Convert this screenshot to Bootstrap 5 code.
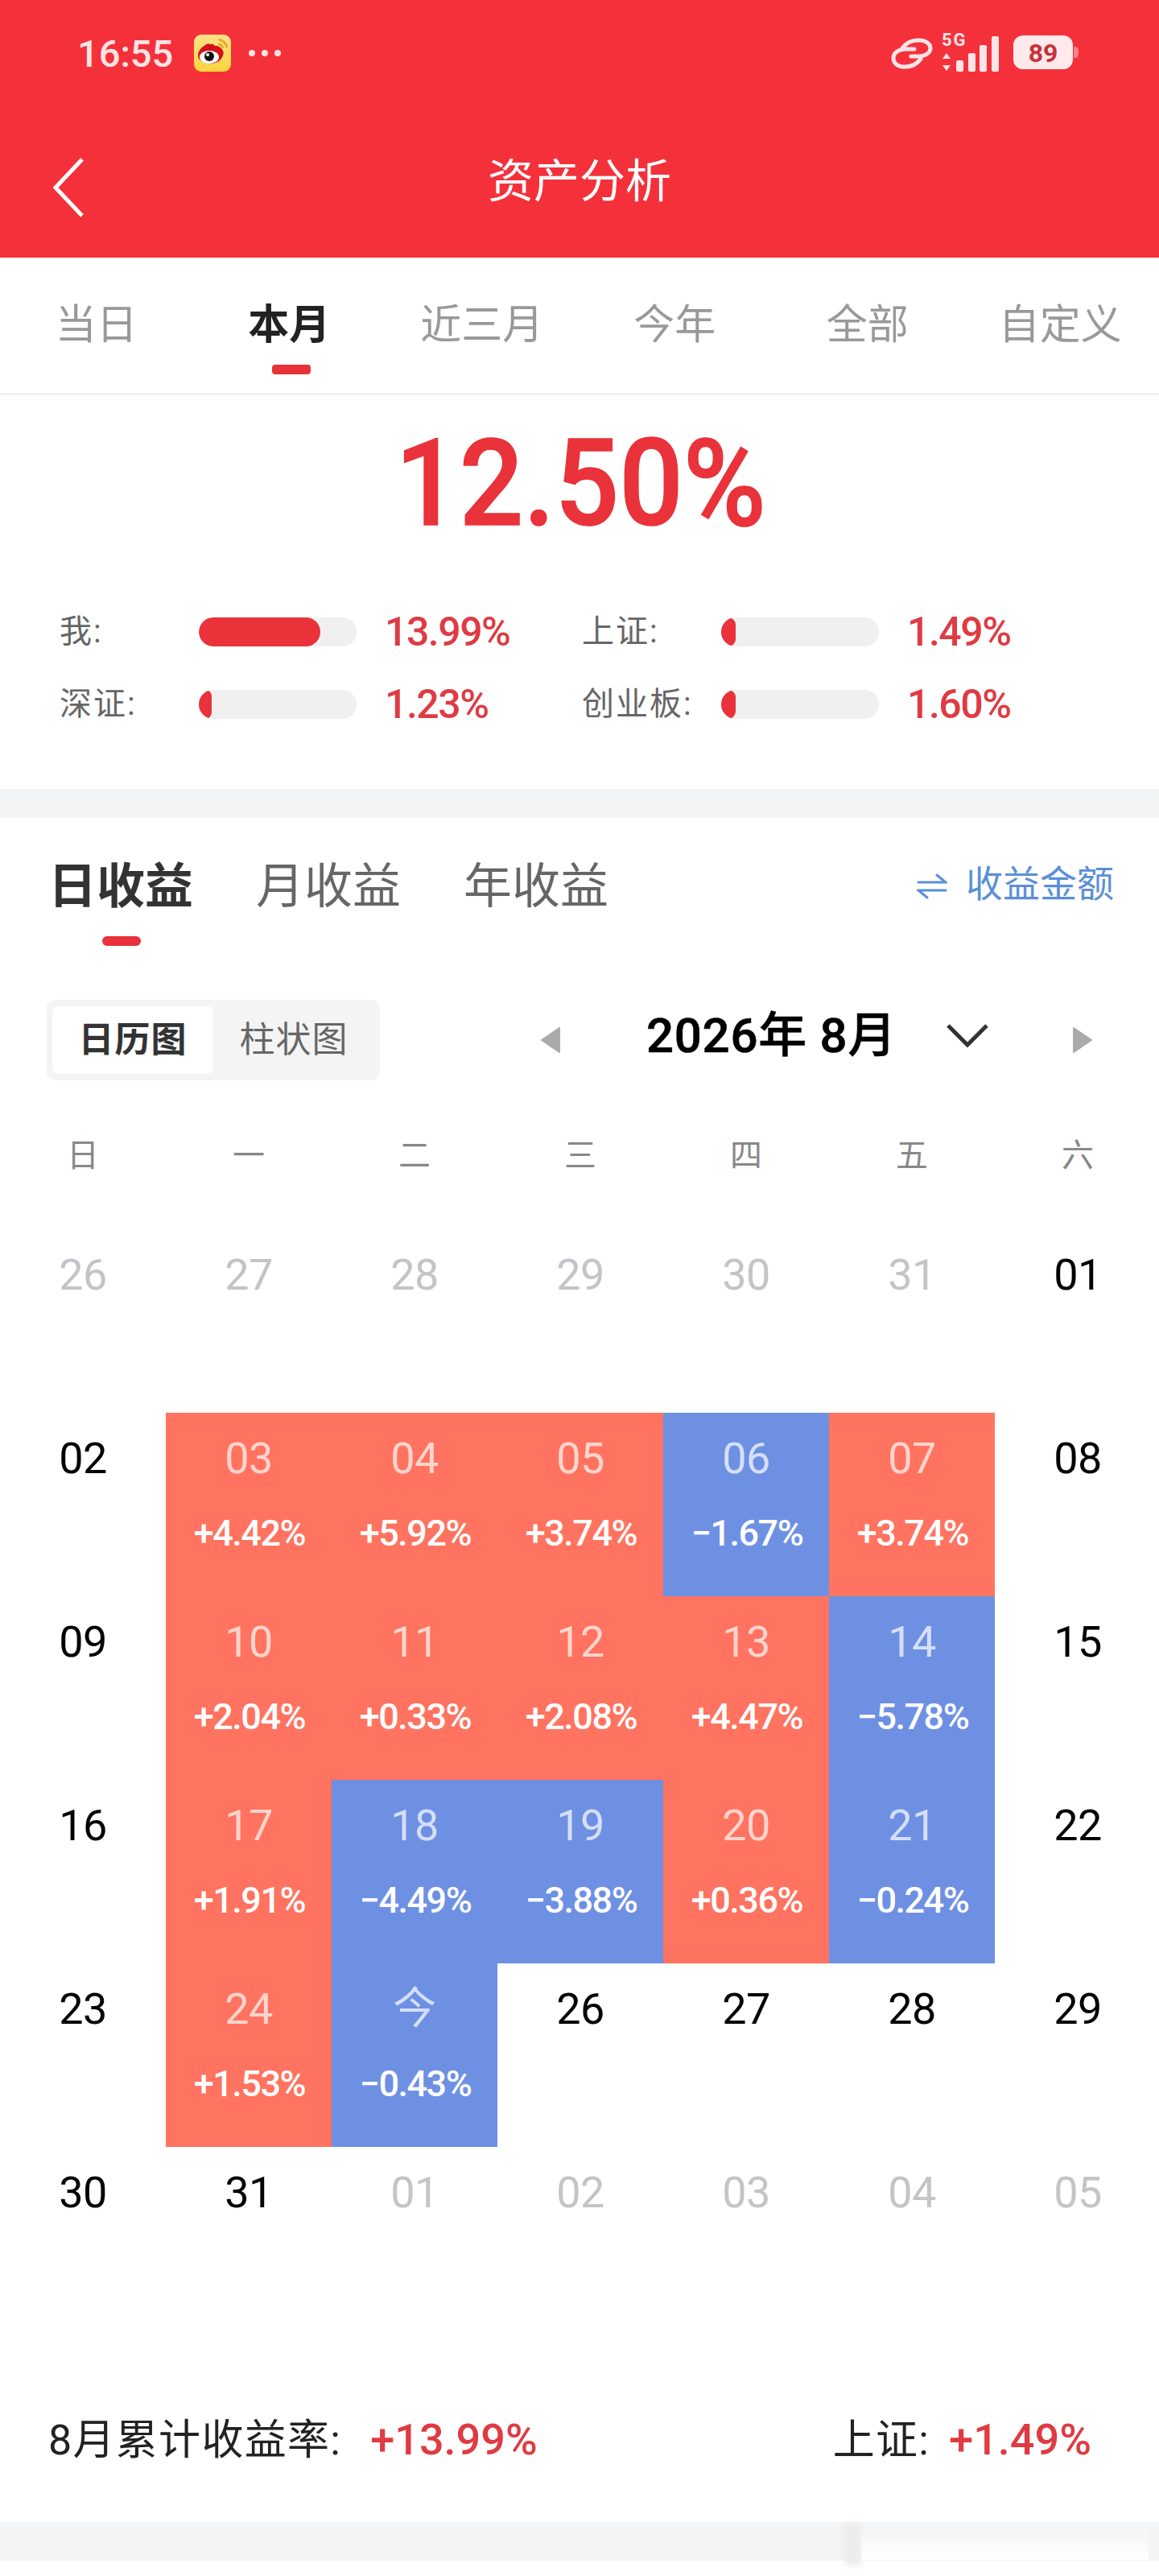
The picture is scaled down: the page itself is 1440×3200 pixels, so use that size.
<!DOCTYPE html>
<html lang="zh-CN">
<head>
<meta charset="utf-8">
<title>资产分析</title>
<link href="https://cdn.jsdelivr.net/npm/bootstrap@5.3.0/dist/css/bootstrap.min.css" rel="stylesheet">
<style>
html,body{margin:0;background:#fff}
body{width:1440px;height:3200px;overflow:hidden;font-family:"Roboto","Noto Sans CJK SC",sans-serif;color:#000;position:relative}
.app-head{height:320px;background:#f4313b;color:#fff}
.status-row{height:132px;padding:0 100px 0 96px}
.clock{font-family:"Roboto",sans-serif;font-size:47px;font-weight:500;color:#ffe4e6;line-height:1}
.ico-weibo{margin-left:26px}
.ico-dots{margin-left:21px}
.ico-signal{margin:-8px 0 0 11px}
.ico-batt{margin-left:15px}
.title-row{height:188px;position:relative;padding-bottom:2px}
.title-row h1{font-size:57px;font-weight:400;margin:0;line-height:1}
.back-ico{position:absolute;left:64px;top:64px}
.range-tabs{height:171px;border-bottom:3px solid #f2f2f2;font-size:51px;color:#999}
.range-tab{position:relative;width:239.5px;text-align:center;line-height:1;padding-top:58px}
.range-tab.on{color:#222;font-weight:700}
.range-tab.on::after{content:"";position:absolute;left:50%;margin-left:-21px;top:133px;width:48px;height:12px;border-radius:4px;background:#e8313a}
.big-num{font-family:"Roboto",sans-serif;font-size:150px;font-weight:500;color:#e9323a;line-height:1;height:200px;padding:35px 0 0 4px;text-align:center}
.big-num span{display:inline-block;transform:scaleX(.935);-webkit-text-stroke:1.5px #e9323a}
.cmp-grid{padding:76px 0 0 74px;display:grid;grid-template-columns:649px 600px;row-gap:54px;height:289px;align-content:start}
.cmp-item{display:flex;align-items:center;height:36px}
.cmp-name{width:173px;font-size:40px;color:#666;line-height:1;white-space:nowrap;letter-spacing:2px}
.cmp-track{width:196px;height:36px;border-radius:18px;background:#f0f0f0;overflow:hidden}
.cmp-fill{height:100%;background:#e9323a;border-radius:18px}
.cmp-val{font-family:"Roboto",sans-serif;font-size:50px;color:#e03a42;margin-left:35px;font-weight:500;letter-spacing:-1.5px;line-height:1}
.band{background:#f3f4f6}
.band-top{height:36px}
.earn-tabs{height:168px;padding:0 56px 0 60px}
.earn-tab{font-size:60px;color:#666;margin-right:78px;line-height:1;padding-top:56px;position:relative}
.earn-tab.on{color:#333;font-weight:700}
.earn-tab.on::after{content:"";position:absolute;left:67px;top:147px;width:48px;height:12px;border-radius:6px;background:#e8313a}
.amount-link{font-size:46px;color:#5b8fd6;padding-top:59px;line-height:1}
.ico-swap{margin:10px 23px 0 0}
.ctl-row{height:128px;padding:0 0 0 58px;margin-top:44px}
.seg{width:414px;height:100px;background:#f4f4f4;border-radius:10px;padding:8px 7px;display:flex}
.seg-item{font-size:44px;line-height:84px;text-align:center;color:#666;letter-spacing:1px}
.seg-item.on{width:200px;background:#fff;color:#333;font-weight:700;border-radius:8px}
.seg-item.off{flex:1 1 0}
.ico-prev{margin-left:199px}
.month-label{font-size:60px;font-weight:500;line-height:1;margin:0 0 10px 106px;white-space:nowrap;color:#000;-webkit-text-stroke:.6px #000;letter-spacing:.7px}
.ico-chev{margin:0 0 12px 62px}
.ico-next{margin-left:104px}
.cal{display:grid;grid-template-columns:repeat(7,206px);width:1442px}
.wk{height:171px;line-height:1;font-size:40px;color:#888;text-align:center;padding-top:60px}
.day{height:228px;text-align:center;padding-top:30px;line-height:1;font-size:54px;color:#000;font-weight:400;letter-spacing:-.5px}
.day.dim{color:#c4c4c8}
.day.up{background:#ff7360;color:#ffd5cd}
.day.dn{background:#6e90e3;color:#d5dffa}
.day .pct{display:block;font-size:45px;color:#fff;font-weight:500;margin-top:43px;letter-spacing:-1.5px;padding-left:2px}
.sum-row{padding:32px 84px 0 60px;height:238px;font-size:52px;color:#222;letter-spacing:1.3px}
.sum-row b{font-family:"Roboto",sans-serif;font-weight:500;color:#e03a42;font-size:54px;letter-spacing:0}
.sum-rate{margin-left:36px}
.sum-idx{margin-left:24px}
.band-bot{height:48px}
.home-fade{position:absolute;left:1070px;top:3136px;width:357px;height:44px;background:linear-gradient(to bottom,rgba(255,255,255,0),#fff)}
.home-edge{position:absolute;left:1050px;top:3134px;width:20px;height:53px;background:#ececec;filter:blur(3px)}
</style>
</head>
<body>
<header class="app-head">
  <div class="status-row d-flex align-items-center justify-content-between">
    <div class="d-flex align-items-center">
      <span class="clock">16:55</span>
      <svg class="ico-weibo" width="46" height="46" viewBox="0 0 46 46"><defs><linearGradient id="wbg" x1="0" y1="0" x2="0" y2="1"><stop offset="0" stop-color="#fce28a"/><stop offset="1" stop-color="#fcd43c"/></linearGradient></defs><rect width="46" height="46" rx="9" fill="url(#wbg)"/><path d="M5 26c0-7 7-13 13-15 2 2 4 0 6 1 2 3 5 1 7 3 4 2 7 6 5 11-3 8-11 11-18 10-7-1-13-4-13-10z" fill="#d5121a"/><ellipse cx="19" cy="28" rx="12" ry="8" fill="#fff"/><circle cx="19" cy="27" r="6" fill="#111"/><circle cx="17" cy="25" r="2" fill="#fff"/><path d="M31 6c5 1 9 5 10 10M30 12c3 0 5 2 6 5" stroke="#e8a82f" stroke-width="3" fill="none"/></svg>
      <svg class="ico-dots" width="42" height="12" viewBox="0 0 42 12"><circle cx="5" cy="6" r="4" fill="#ffe4e6"/><circle cx="21" cy="6" r="4" fill="#ffe4e6"/><circle cx="37" cy="6" r="4" fill="#ffe4e6"/></svg>
    </div>
    <div class="d-flex align-items-center">
      <svg width="52" height="40" viewBox="0 0 52 40" fill="none" stroke="#ffe4e6" stroke-width="5" stroke-linecap="round"><path d="M25 24h9c8 0 15-4 15-10S43 4 34 4C25 4 18 8 14 14"/><path d="M29 15h-9C10 15 3 19 3 26s6 11 14 11c9 0 16-4 20-10"/></svg>
      <svg class="ico-signal" width="74" height="56" viewBox="0 -8 74 56"><text x="0" y="15" font-family="Roboto" font-weight="700" font-size="22" letter-spacing="2" fill="#ffe4e6">5G</text><path d="M6 24l-5 7h10zM6 46l-5-7h10z" fill="#ffe4e6"/><rect x="18" y="33" width="9" height="14" rx="2" fill="#ffe4e6"/><rect x="33" y="24" width="9" height="23" rx="2" fill="#ffe4e6"/><rect x="47" y="14" width="9" height="33" rx="2" fill="#ffe4e6"/><rect x="62" y="3" width="9" height="44" rx="2" fill="#ffe4e6"/></svg>
      <svg class="ico-batt" width="81" height="44" viewBox="0 0 81 44"><rect width="74" height="42" rx="12" fill="#ffe9ea"/><path d="M75 14h1c3 0 5 2 5 5v4c0 3-2 5-5 5h-1z" fill="#f9818a"/><text x="37" y="33" text-anchor="middle" font-family="Roboto" font-weight="700" font-size="32" fill="#c9303a">89</text></svg>
    </div>
  </div>
  <div class="title-row d-flex align-items-center justify-content-center">
    <svg class="back-ico" width="42" height="74" viewBox="0 0 42 74" fill="none" stroke="#fff" stroke-width="5"><path d="M38 2L5 37l33 35"/></svg>
    <h1>资产分析</h1>
  </div>
</header>

<nav class="range-tabs d-flex">
  <div class="range-tab">当日</div>
  <div class="range-tab on">本月</div>
  <div class="range-tab">近三月</div>
  <div class="range-tab">今年</div>
  <div class="range-tab">全部</div>
  <div class="range-tab">自定义</div>
</nav>

<section>
  <div class="big-num"><span>12.50%</span></div>
  <div class="cmp-grid">
    <div class="cmp-item"><span class="cmp-name">我:</span><span class="cmp-track"><span class="cmp-fill d-block" style="width:77%"></span></span><span class="cmp-val">13.99%</span></div>
    <div class="cmp-item"><span class="cmp-name">上证:</span><span class="cmp-track"><span class="cmp-fill d-block" style="width:9%"></span></span><span class="cmp-val">1.49%</span></div>
    <div class="cmp-item"><span class="cmp-name">深证:</span><span class="cmp-track"><span class="cmp-fill d-block" style="width:8%"></span></span><span class="cmp-val">1.23%</span></div>
    <div class="cmp-item"><span class="cmp-name">创业板:</span><span class="cmp-track"><span class="cmp-fill d-block" style="width:9%"></span></span><span class="cmp-val">1.60%</span></div>
  </div>
</section>

<div class="band band-top"></div>

<div class="earn-tabs d-flex justify-content-between">
  <div class="d-flex">
    <div class="earn-tab on">日收益</div>
    <div class="earn-tab">月收益</div>
    <div class="earn-tab">年收益</div>
  </div>
  <div class="amount-link d-flex">
    <svg class="ico-swap" width="38" height="32" viewBox="0 0 38 32" fill="none" stroke="#5b8fd6" stroke-width="3" stroke-linecap="round"><path d="M2 11h34L25 2M36 21H2l11 9"/></svg>
    <span>收益金额</span>
  </div>
</div>

<div class="ctl-row d-flex align-items-center">
  <div class="seg">
    <div class="seg-item on">日历图</div>
    <div class="seg-item off">柱状图</div>
  </div>
  <svg class="ico-prev" width="26" height="34" viewBox="0 0 26 34"><path d="M24 2v30L2 17z" fill="#aaa" stroke="#aaa" stroke-width="2" stroke-linejoin="round"/></svg>
  <div class="month-label">2026年 8月</div>
  <svg class="ico-chev" width="52" height="30" viewBox="0 0 52 30" fill="none" stroke="#333" stroke-width="5"><path d="M2 3l24 24L50 3"/></svg>
  <svg class="ico-next" width="26" height="34" viewBox="0 0 26 34"><path d="M2 2v30l22-15z" fill="#aaa" stroke="#aaa" stroke-width="2" stroke-linejoin="round"/></svg>
</div>

<main class="cal">
  <div class="wk">日</div><div class="wk">一</div><div class="wk">二</div><div class="wk">三</div><div class="wk">四</div><div class="wk">五</div><div class="wk">六</div>

  <div class="day dim">26</div><div class="day dim">27</div><div class="day dim">28</div><div class="day dim">29</div><div class="day dim">30</div><div class="day dim">31</div><div class="day">01</div>

  <div class="day">02</div>
  <div class="day up">03<span class="pct">+4.42%</span></div>
  <div class="day up">04<span class="pct">+5.92%</span></div>
  <div class="day up">05<span class="pct">+3.74%</span></div>
  <div class="day dn">06<span class="pct">−1.67%</span></div>
  <div class="day up">07<span class="pct">+3.74%</span></div>
  <div class="day">08</div>

  <div class="day">09</div>
  <div class="day up">10<span class="pct">+2.04%</span></div>
  <div class="day up">11<span class="pct">+0.33%</span></div>
  <div class="day up">12<span class="pct">+2.08%</span></div>
  <div class="day up">13<span class="pct">+4.47%</span></div>
  <div class="day dn">14<span class="pct">−5.78%</span></div>
  <div class="day">15</div>

  <div class="day">16</div>
  <div class="day up">17<span class="pct">+1.91%</span></div>
  <div class="day dn">18<span class="pct">−4.49%</span></div>
  <div class="day dn">19<span class="pct">−3.88%</span></div>
  <div class="day up">20<span class="pct">+0.36%</span></div>
  <div class="day dn">21<span class="pct">−0.24%</span></div>
  <div class="day">22</div>

  <div class="day">23</div>
  <div class="day up">24<span class="pct">+1.53%</span></div>
  <div class="day dn">今<span class="pct">−0.43%</span></div>
  <div class="day">26</div><div class="day">27</div><div class="day">28</div><div class="day">29</div>

  <div class="day">30</div><div class="day">31</div><div class="day dim">01</div><div class="day dim">02</div><div class="day dim">03</div><div class="day dim">04</div><div class="day dim">05</div>
</main>

<div class="sum-row d-flex align-items-center justify-content-between">
  <div>8月累计收益率:<b class="sum-rate">+13.99%</b></div>
  <div>上证:<b class="sum-idx">+1.49%</b></div>
</div>
<div class="band band-bot"></div>
<div class="home-edge"></div>
<div class="home-fade"></div>
<script src="https://cdn.jsdelivr.net/npm/bootstrap@5.3.0/dist/js/bootstrap.bundle.min.js"></script>
</body>
</html>
